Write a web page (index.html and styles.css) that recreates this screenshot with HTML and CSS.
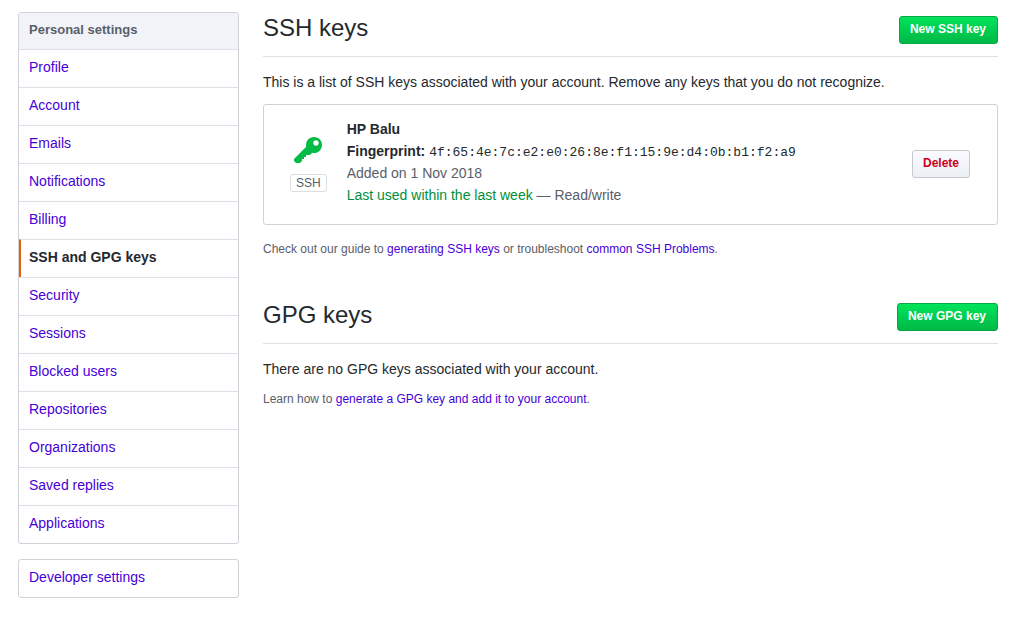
FILE: index.html
```html
<!DOCTYPE html>
<html lang="en">
<head>
<meta charset="utf-8">
<meta name="viewport" content="width=device-width, initial-scale=1">
<title>SSH and GPG keys</title>
<link rel="stylesheet" href="styles.css">
</head>
<body>
<div class="layout">
  <aside class="sidebar">
    <nav class="menu" aria-labelledby="settings-title">
      <h3 class="menu-heading" id="settings-title">Personal settings</h3>
      <a class="menu-item" href="#">Profile</a>
      <a class="menu-item" href="#">Account</a>
      <a class="menu-item" href="#">Emails</a>
      <a class="menu-item" href="#">Notifications</a>
      <a class="menu-item" href="#">Billing</a>
      <a class="menu-item selected" href="#" aria-current="page">SSH and GPG keys</a>
      <a class="menu-item" href="#">Security</a>
      <a class="menu-item" href="#">Sessions</a>
      <a class="menu-item" href="#">Blocked users</a>
      <a class="menu-item" href="#">Repositories</a>
      <a class="menu-item" href="#">Organizations</a>
      <a class="menu-item" href="#">Saved replies</a>
      <a class="menu-item" href="#">Applications</a>
    </nav>
    <nav class="menu" aria-label="Developer">
      <a class="menu-item" href="#">Developer settings</a>
    </nav>
  </aside>
  <main class="content">
    <section>
      <header class="subhead">
        <h2 class="subhead-title">SSH keys</h2>
        <button class="btn btn-primary" type="button">New SSH key</button>
      </header>
      <p class="intro">This is a list of SSH keys associated with your account. Remove any keys that you do not recognize.</p>
      <div class="key-card">
        <div class="key-type">
          <svg class="key-icon" viewBox="0 0 14 16" width="28" height="32" aria-hidden="true"><path fill-rule="evenodd" d="M12.83 2.17C12.08 1.42 11.14 1.03 10 1c-1.13.03-2.08.42-2.83 1.17S6.04 3.86 6.01 5c0 .3.03.59.09.89L0 12v1l1 1h2l1-1v-1h1v-1h1v-1h2l1.09-1.11c.3.08.59.11.91.11 1.14-.03 2.08-.42 2.83-1.17S13.97 6.14 14 5c-.03-1.14-.42-2.08-1.17-2.83zM11 5.38c-.77 0-1.38-.61-1.38-1.38 0-.77.61-1.38 1.38-1.38.77 0 1.38.61 1.38 1.38 0 .77-.61 1.38-1.38 1.38z"/></svg>
          <span class="tag">SSH</span>
        </div>
        <div class="key-details">
          <strong>HP Balu</strong>
          <div><strong>Fingerprint:</strong> <code class="fingerprint">4f:65:4e:7c:e2:e0:26:8e:f1:15:9e:d4:0b:b1:f2:a9</code></div>
          <div class="muted">Added on 1 Nov 2018</div>
          <div class="muted"><span class="recent">Last used within the last week</span> — Read/write</div>
        </div>
        <button class="btn btn-danger" type="button">Delete</button>
      </div>
      <p class="note">Check out our guide to <a href="#">generating SSH keys</a> or troubleshoot <a href="#">common SSH Problems</a>.</p>
    </section>
    <section class="gpg">
      <header class="subhead">
        <h2 class="subhead-title">GPG keys</h2>
        <button class="btn btn-primary" type="button">New GPG key</button>
      </header>
      <p class="intro">There are no GPG keys associated with your account.</p>
      <p class="note note-close">Learn how to <a href="#">generate a GPG key and add it to your account</a>.</p>
    </section>
  </main>
</div>
</body>
</html>
```

FILE: styles.css
```css
* { box-sizing: border-box; }

body {
  margin: 0;
  background: #fff;
  color: #24292e;
  font: 14px/22px "Liberation Sans", Arial, sans-serif;
}

h2, h3, p { margin: 0; }

a { color: #4600d8; text-decoration: none; }

.layout {
  display: grid;
  grid-template-columns: 221px minmax(0, 1fr);
  gap: 24px;
  padding: 10px 27px 24px 18px;
}

.sidebar {
  display: flex;
  flex-direction: column;
  gap: 15px;
  padding-top: 2px;
}

.menu {
  overflow: hidden;
  border: 1px solid #d1d1da;
  border-radius: 3px;
}

.menu-heading {
  padding: 7px 10px 9px;
  background: #f2f3f8;
  color: #586069;
  font-size: 13px;
  line-height: 20px;
}

.menu-item {
  display: block;
  padding: 6px 10px 9px;
  border-top: 1px solid #dfe0e6;
  line-height: 22px;
}

.menu-item:first-child { border-top: 0; }

.menu-item.selected {
  padding-left: 8px;
  border-left: 2px solid #e36209;
  color: #24292e;
  font-weight: bold;
}

.subhead {
  display: flex;
  align-items: center;
  justify-content: space-between;
  gap: 16px;
  height: 47px;
  padding-bottom: 7px;
  border-bottom: 1px solid #e1e1e5;
}

.subhead-title {
  padding-bottom: 3px;
  font-size: 24px;
  font-weight: normal;
  line-height: 36px;
}

.btn {
  height: 28px;
  padding: 0 10px 2px;
  border: 1px solid;
  border-radius: 3px;
  font: bold 12px/20px "Liberation Sans", Arial, sans-serif;
  white-space: nowrap;
  cursor: pointer;
}

.btn-primary {
  padding-right: 11px;
  border-color: #08a744;
  background: linear-gradient(#00e45a, #00b846);
  color: #fff;
}

.btn-danger {
  margin-bottom: 1px;
  border-color: #c6c9ce;
  background: linear-gradient(#fafbfd, #eceff5);
  color: #cb0022;
}

.intro { padding-top: 14px; }

.key-card {
  display: flex;
  align-items: center;
  margin-top: 11px;
  padding: 0 27px 0 26px;
  border: 1px solid #d1d1da;
  border-radius: 3px;
}

.key-type {
  display: flex;
  flex-direction: column;
  align-items: center;
  gap: 7px;
  padding-bottom: 2px;
}

.key-icon { fill: #04bb46; }

.tag {
  padding: 0 5px;
  border: 1px solid #dcdce2;
  border-radius: 3px;
  color: #586069;
  font-size: 12px;
  line-height: 16px;
}

.key-details {
  flex: 1;
  min-width: 0;
  padding: 13px 20px 18px;
}

.fingerprint {
  font: 13px/16px "Liberation Mono", monospace;
  overflow-wrap: anywhere;
}

.muted { color: #586069; }

.recent { color: #008f39; }

.note {
  padding-top: 15px;
  color: #586069;
  font-size: 12px;
  line-height: 18px;
}

.note-close { padding-top: 10px; }

.gpg { margin-top: 39px; }
```
